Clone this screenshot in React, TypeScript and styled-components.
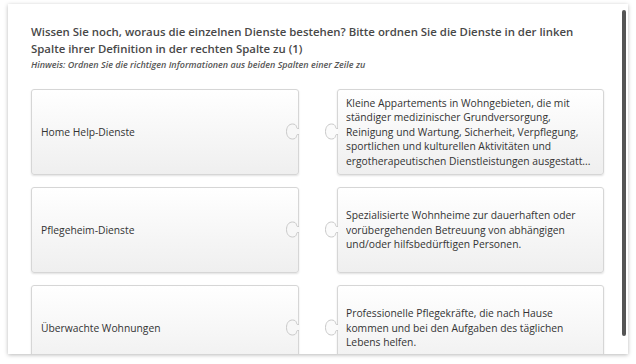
import { Fragment } from "react";
import styled, { createGlobalStyle } from "styled-components";

const GlobalStyle = createGlobalStyle`
  html, body {
    margin: 0;
    padding: 0;
    background: #ffffff;
  }
  body {
    font-family: "Open Sans", "Noto Sans", sans-serif;
  }
`;

const Page = styled.div`
  width: 636px;
  height: 364px;
  padding: 4px 8px 0 8px;
  box-sizing: border-box;
`;

const Card = styled.div`
  position: relative;
  height: 350px;
  background: #fff;
  box-shadow: 0 1px 4px rgba(0, 0, 0, 0.28);
  overflow: hidden;
  padding: 20px 24px 0 23px;
  box-sizing: border-box;
`;

const ScrollThumb = styled.div`
  position: absolute;
  top: 6px;
  right: 2px;
  width: 4px;
  height: 326px;
  border-radius: 2px;
  background: #555;
`;

const Question = styled.h2`
  margin: 0;
  font-size: 11.4px;
  line-height: 16.5px;
  font-weight: 600;
  color: #484848;
`;

const Hint = styled.p`
  margin: 1px 0 0 0;
  font-size: 9px;
  line-height: 13px;
  font-style: italic;
  font-weight: 600;
  color: #555;
`;

const Board = styled.div`
  display: grid;
  grid-template-columns: 268px 267px;
  column-gap: 38px;
  row-gap: 12px;
  grid-auto-rows: 86px;
  margin-top: 18px;
`;

const Tile = styled.div<{ $side: "left" | "right" }>`
  position: relative;
  display: flex;
  align-items: center;
  box-sizing: border-box;
  padding: 0 ${(p) => (p.$side === "left" ? "9px" : "8px")};
  border: 1px solid #d6d6d6;
  border-radius: 3px;
  background: linear-gradient(#ffffff, #efefef);
  box-shadow: 0 1px 2px rgba(0, 0, 0, 0.12);
  color: #333;
  font-size: 10.3px;
  line-height: 14.5px;
`;

const Clamp = styled.span`
  display: -webkit-box;
  -webkit-box-orient: vertical;
  -webkit-line-clamp: 5;
  overflow: hidden;
`;

const Knob = styled.svg<{ $side: "left" | "right" }>`
  position: absolute;
  top: 50%;
  margin-top: -9px;
  width: 13px;
  height: 17px;
  ${(p) => (p.$side === "left" ? "right: -1px;" : "left: -13px;")}
`;

// puzzle tab: narrow neck at the edge, round head bulging away from it
const knobShape =
  "M13 5.5 L11.5 5.5 C10 5.5 11.5 1 6.5 1 C2.5 1 0.5 4.5 0.5 8.5 C0.5 12.5 2.5 16 6.5 16 C11.5 16 10 11.5 11.5 11.5 L13 11.5";

const PuzzleKnob = ({ side, fill }: { side: "left" | "right"; fill: string }) => (
  <Knob $side={side} viewBox="0 0 13 17">
    <path d={knobShape + " Z"} fill={fill} stroke="none" />
    <path d={knobShape} fill="none" stroke="#c9c9c9" strokeWidth="1" />
  </Knob>
);

const pairs = [
  {
    term: "Home Help-Dienste",
    definition:
      "Kleine Appartements in Wohngebieten, die mit ständiger medizinischer Grundversorgung, Reinigung und Wartung, Sicherheit, Verpflegung, sportlichen und kulturellen Aktivitäten und ergotherapeutischen Dienstleistungen ausgestatt...",
  },
  {
    term: "Pflegeheim-Dienste",
    definition:
      "Spezialisierte Wohnheime zur dauerhaften oder vorübergehenden Betreuung von abhängigen und/oder hilfsbedürftigen Personen.",
  },
  {
    term: "Überwachte Wohnungen",
    definition:
      "Professionelle Pflegekräfte, die nach Hause kommen und bei den Aufgaben des täglichen Lebens helfen.",
  },
];

export default function App() {
  return (
    <Page>
      <GlobalStyle />
      <Card>
        <Question>
          Wissen Sie noch, woraus die einzelnen Dienste bestehen? Bitte ordnen Sie die Dienste in der linken
          Spalte ihrer Definition in der rechten Spalte zu (1)
        </Question>
        <Hint>Hinweis: Ordnen Sie die richtigen Informationen aus beiden Spalten einer Zeile zu</Hint>
        <Board>
          {pairs.map((pair) => (
            <Fragment key={pair.term}>
              <Tile $side="left">
                {pair.term}
                <PuzzleKnob side="left" fill="#f7f7f7" />
              </Tile>
              <Tile $side="right">
                <Clamp>{pair.definition}</Clamp>
                <PuzzleKnob side="right" fill="#fbfbfb" />
              </Tile>
            </Fragment>
          ))}
        </Board>
        <ScrollThumb />
      </Card>
    </Page>
  );
}
